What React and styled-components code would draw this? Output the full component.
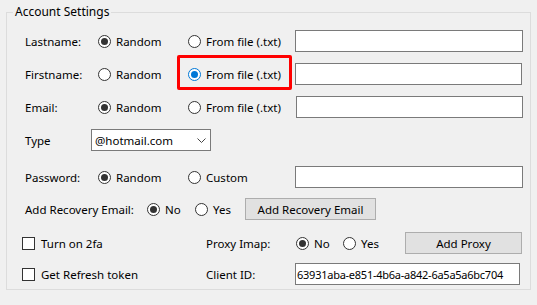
import React from 'react';
import styled, { createGlobalStyle } from 'styled-components';

const GlobalStyle = createGlobalStyle`
  html, body { margin: 0; padding: 0; background: #f0f0f0; }
  body {
    font-family: "Segoe UI", "Noto Sans", sans-serif;
    font-size: 11.5px;
    color: #000;
  }
  * { box-sizing: border-box; }
`;

const Page = styled.div`
  width: 537px;
  height: 305px;
  padding: 4px 6px 0;
`;

const Group = styled.fieldset`
  margin: 0;
  padding: 0;
  min-width: 0;
  height: 286px;
  border: 1px solid #dcdcdc;
`;

const Caption = styled.legend`
  margin-left: 6px;
  padding: 0 2px;
  font-size: 12px;
  line-height: 16px;
`;

const Body = styled.div`
  display: flex;
  flex-direction: column;
  padding-left: 15px;
`;

const Row = styled.div`
  display: flex;
  align-items: center;
  height: 22px;
  margin-top: ${p => p.$top}px;
  padding-left: ${p => (p.$flush ? 0 : 3)}px;
`;

const Cell = styled.div`
  flex: none;
  width: ${p => p.$w}px;
  height: 100%;
  display: flex;
  align-items: center;
  position: relative;
  white-space: nowrap;

  &::before {
    content: '';
    display: ${p => (p.$mark ? 'block' : 'none')};
    position: absolute;
    left: -11px;
    right: 3px;
    top: -8px;
    bottom: -5px;
    border: 3px solid #ff0000;
    border-radius: 2px;
  }
`;

const Choice = styled.label`
  display: inline-flex;
  align-items: center;
  gap: ${p => p.$gap || 5}px;
`;

const Dot = styled.span`
  width: 13px;
  height: 13px;
  border-radius: 50%;
  border: 1px solid ${p => (p.$focus ? '#0078d7' : '#333')};
  background: #fff;
  display: flex;
  align-items: center;
  justify-content: center;

  &::after {
    content: '';
    width: 7px;
    height: 7px;
    border-radius: 50%;
    background: ${p => (p.$focus ? '#0078d7' : '#333')};
    display: ${p => (p.$on ? 'block' : 'none')};
  }
`;

const Box = styled.span`
  width: 13px;
  height: 13px;
  border: 1px solid #333;
  background: #fff;
`;

const Field = styled.input`
  width: ${p => p.$w}px;
  height: 22px;
  border: 1px solid #7a7a7a;
  background: #fff;
  padding: 0 1px;
  font: inherit;
  font-size: ${p => (p.$small ? 11 : 11.5)}px;
  letter-spacing: ${p => (p.$small ? -0.25 : 0)}px;
  color: #000;
  outline: none;
`;

const Combo = styled.div`
  width: 120px;
  height: 22px;
  border: 1px solid #7a7a7a;
  background: #fff;
  display: flex;
  align-items: center;
  justify-content: space-between;
  padding: 0 4px 0 3px;
`;

const Button = styled.button`
  width: ${p => p.$w}px;
  height: 22px;
  border: 1px solid #adadad;
  background: #e1e1e1;
  font: inherit;
  color: #000;
  padding: 0;
`;

const Radio = ({ on, focus, children }) => (
  <Choice>
    <Dot $on={on} $focus={focus} />
    {children}
  </Choice>
);

const Check = ({ children }) => (
  <Choice $gap={6}>
    <Box />
    {children}
  </Choice>
);

const Chevron = () => (
  <svg width="9" height="5" viewBox="0 0 9 5">
    <path d="M0.5 0.5 L4.5 4.5 L8.5 0.5" fill="none" stroke="#444" strokeWidth="1" />
  </svg>
);

const SourceRow = ({ top, label, first, mark, w2 = 107, fw = 228 }) => (
  <Row $top={top}>
    <Cell $w={73}>{label}</Cell>
    <Cell $w={90}><Radio on={first}>Random</Radio></Cell>
    <Cell $w={w2} $mark={mark}><Radio on={!first} focus={mark}>From file (.txt)</Radio></Cell>
    <Field $w={fw} />
  </Row>
);

export default function App() {
  return (
    <Page>
      <GlobalStyle />
      <Group>
        <Caption>Account Settings</Caption>
        <Body>
          <SourceRow top={10} label="Lastname:" first />
          <SourceRow top={11} label="Firstname:" mark fw={227} />
          <SourceRow top={11} label="Email:" first w2={108} fw={227} />

          <Row $top={11}>
            <Cell $w={66}>Type</Cell>
            <Combo>
              <span>@hotmail.com</span>
              <Chevron />
            </Combo>
          </Row>

          <Row $top={15}>
            <Cell $w={73}>Password:</Cell>
            <Cell $w={90}><Radio on>Random</Radio></Cell>
            <Cell $w={107}><Radio>Custom</Radio></Cell>
            <Field $w={228} />
          </Row>

          <Row $top={10}>
            <Cell $w={122}>Add Recovery Email:</Cell>
            <Cell $w={48}><Radio on>No</Radio></Cell>
            <Cell $w={50}><Radio>Yes</Radio></Cell>
            <Button $w={131}>Add Recovery Email</Button>
          </Row>

          <Row $top={12} $flush>
            <Cell $w={184}><Check>Turn on 2fa</Check></Cell>
            <Cell $w={90}>Proxy Imap:</Cell>
            <Cell $w={47}><Radio on>No</Radio></Cell>
            <Cell $w={62}><Radio>Yes</Radio></Cell>
            <Button $w={117}>Add Proxy</Button>
          </Row>

          <Row $top={9} $flush>
            <Cell $w={184}><Check>Get Refresh token</Check></Cell>
            <Cell $w={89}>Client ID:</Cell>
            <Field $w={225} $small defaultValue="63931aba-e851-4b6a-a842-6a5a5a6bc704" />
          </Row>
        </Body>
      </Group>
    </Page>
  );
}
